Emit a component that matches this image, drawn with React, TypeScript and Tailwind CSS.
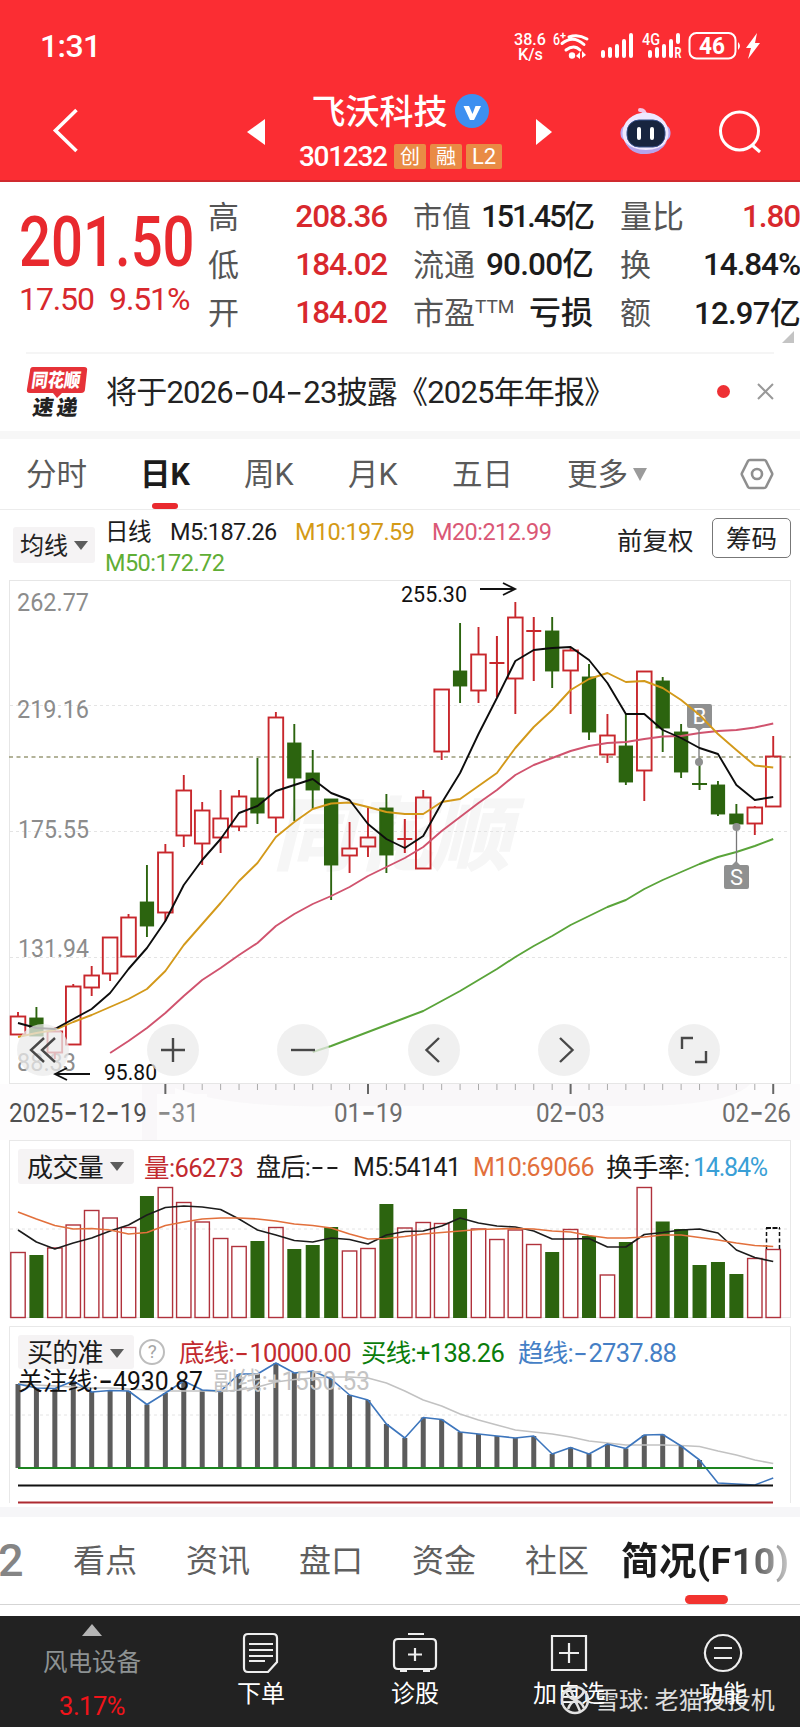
import React from 'react';

type Candle = [kind: 'r' | 'g', high: number, top: number, bottom: number, low: number];

const STEP = 18.42;
const xAt = (i: number) => 18 + STEP * i;

const CANDLES: Candle[] = [
    ['r', 1012, 1016, 1035, 1035], ['g', 1007, 1018, 1036, 1036], ['r', 1027, 1031, 1053, 1059], ['r', 984, 986, 1045, 1045],
    ['r', 966, 975, 988, 996], ['r', 937, 937, 974, 981], ['r', 914, 917, 957, 957], ['g', 865, 902, 926, 937],
    ['r', 844, 852, 913, 921], ['r', 775, 790, 836, 847], ['r', 802, 810, 844, 865], ['r', 790, 818, 838, 853],
    ['r', 790, 796, 827, 831], ['g', 758, 798, 813, 824], ['r', 712, 717, 818, 833], ['g', 724, 743, 778, 821],
    ['g', 750, 773, 790, 809], ['g', 799, 799, 865, 900], ['r', 822, 848, 856, 873], ['r', 808, 837, 847, 857],
    ['g', 794, 808, 855, 873], ['r', 819, 839, 839, 853], ['r', 790, 797, 869, 869], ['r', 689, 689, 752, 760],
    ['g', 623, 671, 686, 703], ['r', 627, 654, 691, 703], ['r', 636, 663, 663, 697], ['r', 602, 617, 679, 714],
    ['r', 617, 631, 631, 681], ['g', 617, 631, 671, 688], ['r', 648, 650, 671, 714], ['g', 664, 677, 732, 740],
    ['r', 714, 735, 755, 763], ['g', 714, 746, 782, 785], ['r', 671, 671, 771, 801], ['g', 677, 681, 728, 752],
    ['g', 724, 732, 772, 778], ['g', 758, 784, 784, 790], ['g', 781, 785, 814, 816], ['g', 804, 814, 824, 826],
    ['r', 806, 807, 824, 835], ['r', 736, 756, 807, 807],
];

const MA5 = [1023, 1028, 1029, 1019, 1009, 993, 969, 948, 921, 885, 860, 839, 813, 806, 791, 785, 779, 793, 800, 824, 839, 848, 836, 803, 773, 734, 698, 661, 650, 648, 647, 660, 683, 714, 714, 730, 738, 748, 754, 785, 800, 797];
const MA10 = [1037, 1033, 1030, 1022, 1015, 1007, 999, 989, 971, 945, 924, 903, 881, 863, 837, 822, 809, 803.5, 802.5, 807, 812, 814, 814, 802, 799, 786, 773, 748, 727, 710, 690, 679, 673, 682, 681, 688, 700, 715, 734, 750, 765.5, 767.5];
const MA20 = [1053, 1041, 1028, 1013, 996, 980, 968, 955, 943, 926, 914, 904, 896, 887, 876, 867, 858, 847, 831, 817, 803, 790, 775, 765, 758, 751, 746, 743, 742, 739, 736.5, 736, 733, 731, 730, 727.5, 723.5];
const MA50 = [1052, 1046, 1039, 1032, 1025, 1018, 1011, 1001, 991, 980, 969, 957, 946, 936, 925, 916, 907, 900, 889, 880, 872, 864, 857, 852, 846, 839];

const VOLUME = [1252.5, 1255, 1248, 1225, 1210.5, 1218, 1227.5, 1196, 1187.5, 1202.5, 1222, 1238.5, 1246.5, 1241, 1227.5, 1249, 1245, 1227, 1251, 1248.5, 1204, 1228, 1222.5, 1223.5, 1209, 1229, 1239.5, 1230, 1244.5, 1252, 1229.5, 1236, 1275, 1242, 1187.5, 1221.5, 1229, 1265, 1262, 1274, 1258.5, 1249.5];
const VOL5 = [1230, 1242, 1249, 1243, 1238, 1231, 1225, 1215, 1207.5, 1206, 1207, 1209.5, 1219, 1230, 1235, 1240.5, 1242, 1238, 1239.5, 1244, 1235, 1231.5, 1231, 1226, 1218, 1223, 1226, 1227, 1231, 1239, 1239, 1238.5, 1247, 1247, 1234.5, 1232.5, 1230, 1229, 1233, 1250, 1257.5, 1261.5];
const VOL10 = [1212, 1219, 1225.5, 1229, 1228.5, 1230, 1234, 1232.5, 1225.5, 1222, 1219, 1218, 1218, 1219, 1221, 1224, 1225.5, 1228, 1234, 1239, 1238.5, 1236.5, 1234, 1232.5, 1231, 1229.5, 1229, 1228.5, 1229, 1231, 1232, 1235.5, 1238, 1238, 1237, 1235, 1235, 1237.5, 1240, 1243, 1245.5, 1246.5];

const TREND = [1384, 1388, 1388.5, 1381, 1392, 1390.5, 1391, 1404.5, 1393, 1381, 1390, 1391, 1374, 1374, 1363, 1373, 1371, 1379, 1395, 1400, 1424, 1438, 1417.5, 1419.5, 1432, 1434, 1436, 1438, 1436, 1454, 1447.5, 1454, 1444, 1448.5, 1435, 1434.5, 1446, 1460, 1483, 1484, 1485, 1478];
const SUB = [1384, 1385, 1386, 1387, 1388, 1388, 1389, 1390, 1391, 1391, 1391, 1391.5, 1390, 1387, 1382, 1379.5, 1378, 1377, 1377, 1378, 1383, 1391, 1400, 1406, 1414, 1420, 1425, 1430, 1432, 1434, 1437, 1441, 1443, 1445, 1445, 1445, 1445.5, 1446.5, 1451, 1455, 1460, 1463.5];

const toPoints = (ys: number[], from = 0) => ys.map((y, i) => `${xAt(i + from)},${y}`).join(' ');

const Line: React.FC<{ ys: number[]; color: string; from?: number; width?: number }> = ({ ys, color, from = 0, width = 1.9 }) => (
    <polyline points={toPoints(ys, from)} fill="none" stroke={color} strokeWidth={width} strokeLinejoin="round" />
);

const GridLine: React.FC<{ y: number }> = ({ y }) => (
    <line x1="10" x2="790" y1={y} y2={y} stroke="#e4e4e4" strokeWidth="1" strokeDasharray="3 3" />
);

// Text stretched to a known width inside a chart, with long hyphens
const Label: React.FC<{ x: number; y: number; w: number; size: number; color: string; children: string; weight?: number }> = ({ x, y, w, size, color, children, weight = 400 }) => (
    <text x={x} y={y} textLength={w} lengthAdjust="spacingAndGlyphs" fontSize={size} fill={color} fontWeight={weight}>
        {children.split('-').map((part, i) => (
            <React.Fragment key={i}>
                {i > 0 && <tspan dy="2" fontFamily="Inter" fontSize={size * 1.3}>-</tspan>}
                {part && <tspan dy={i > 0 ? -2 : 0}>{part}</tspan>}
            </React.Fragment>
        ))}
    </text>
);

// Same long hyphens for ordinary text
const Dashed: React.FC<{ children: string }> = ({ children }) => (
    <>
        {children.split('-').map((part, i) => (
            <React.Fragment key={i}>
                {i > 0 && <span className="inline-block w-[0.6em] text-center font-['Inter'] tracking-normal scale-x-125">-</span>}
                {part}
            </React.Fragment>
        ))}
    </>
);

const Caret = () => <span className="w-0 h-0 border-x-[7px] border-x-transparent border-t-[9px] border-t-[#5c5c5c]" />;

const StatusBar = () => (
    <div className="flex h-[92px] items-center pl-[40px] text-white">
        <span className="w-[473px] text-[32px] font-medium leading-none tracking-[-0.6px]">1:31</span>
        <svg className="w-[250px] h-[32px] overflow-visible" viewBox="513 30 250 32" fill="#fff">
            <Label x={514} y={45} w={32} size={17} weight={500} color="#fff">38.6</Label>
            <Label x={518} y={60} w={25} size={16} weight={500} color="#fff">K/s</Label>
            <Label x={553} y={45} w={7} size={16} weight={500} color="#fff">6</Label>
            <Label x={560} y={39} w={6} size={11} weight={700} color="#fff">+</Label>
            <g fill="none" stroke="#fff" strokeWidth="3" strokeLinecap="round">
                <path d="M569 37q9-3.500 18 2M562 43.500q11-9 22 1M566 50q8-6 14 0" />
            </g>
            <circle cx="572" cy="55.500" r="3.200" />
            <path d="M576 56l4-4v7zM586 55l-4-4v7z" />
            <g stroke="#fff" strokeWidth="4" strokeLinecap="round">
                <path d="M603 52v4M610 49v7M617 46v10M624 41v15M631 35v21" />
                <path d="M650 52v4M657 49v7M664 46v10M671 41v15M678 35v7" />
            </g>
            <Label x={642} y={45} w={18} size={16} weight={500} color="#fff">4G</Label>
            <Label x={674.5} y={58} w={7} size={14} weight={700} color="#fff">R</Label>
            <rect x="689.500" y="33" width="46" height="25.500" rx="7" fill="none" stroke="#fff" strokeWidth="2" />
            <Label x={699} y={54} w={26} size={23} weight={700} color="#fff">46</Label>
            <path d="M738 42q4 4 0 8zM757 33l-11 15h5l-3 11 12-16h-5z" />
        </svg>
    </div>
);

const TitleBar = () => (
    <div className="flex h-[89px] text-white">
        <svg className="w-[240px] h-[80px]" viewBox="0 92 240 80" fill="none" stroke="#fff" strokeWidth="3.600">
            <path d="M76.500 110L55.500 130.500 76.500 151" />
        </svg>
        <svg className="w-[32px] h-[80px]" viewBox="240 92 32 80" fill="#fff"><path d="M247 132l18-13v26z" /></svg>
        <div className="w-[256px] flex flex-col items-center">
            <div className="flex items-center h-[38px]">
                <span className="pt-[2px] text-[34px] font-medium leading-none whitespace-nowrap">飞沃科技</span>
                <svg className="ml-[7px] w-[34px] h-[34px]" viewBox="0 0 34 34">
                    <circle cx="17" cy="17" r="17" fill="#3d8ff0" />
                    <path d="M8.500 12h5.500l3.500 8 3-8h5.500l-7 14h-4z" fill="#fff" />
                </svg>
            </div>
            <div className="flex items-center gap-[4px] mt-[13px] h-[26px]">
                <span className="w-[92px] pt-[2px] pl-[1px] text-[28px] font-medium leading-none tracking-[-1.3px]">301232</span>
                <span className="w-[32px] h-[25px] rounded-[2px] bg-[#e98b45] text-center text-[20px] leading-[26px]">创</span>
                <span className="w-[32px] h-[25px] rounded-[2px] bg-[#e98b45] text-center text-[20px] leading-[26px]">融</span>
                <span className="w-[36px] h-[25px] rounded-[2px] bg-[#e98b45] text-center text-[22px] leading-[26px]">L2</span>
            </div>
        </div>
        <svg className="w-[272px] h-[80px]" viewBox="528 92 272 80">
            <path d="M536 119l16 13-16 13z" fill="#fff" />
            <path d="M645 116q0-6-5-6" fill="none" stroke="#f4c6e6" strokeWidth="4" strokeLinecap="round" />
            <rect x="620.500" y="125" width="50" height="16" rx="7" fill="#b9a8f2" />
            <ellipse cx="645.500" cy="133" rx="23" ry="20.500" fill="#eee8ff" />
            <path d="M625 142q6 13 21 12 14 0 21-12-8 8-21 8t-21-8z" fill="#b5a4ec" />
            <rect x="627" y="120" width="38" height="27" rx="12" fill="#17243f" stroke="#36508a" />
            <path d="M639 129v9M652 129v9" stroke="#fff" strokeWidth="4" strokeLinecap="round" />
            <circle cx="739.500" cy="131" r="19" fill="none" stroke="#fff" strokeWidth="3" />
            <path d="M752 145l8 7" stroke="#fff" strokeWidth="3" />
        </svg>
    </div>
);

const Row: React.FC<{ label: React.ReactNode; value: string; size?: string; red?: boolean }> = ({ label, value, size = 'text-[31.500px] tracking-[-1.100px]', red }) => (
    <div className="flex h-[48px] items-center justify-between whitespace-nowrap leading-none">
        <span className="text-[31px] text-[#555]">{label}</span>
        <span className={`font-medium ${size} ${red ? 'text-[#d8282d]' : 'text-[#1c1c1c]'}`}>{value}</span>
    </div>
);

const Quote = () => (
    <div className="flex h-[170px] pt-[11px]">
        <div className="w-[208px] pl-[19px] whitespace-nowrap text-[#e8292e]">
            <div className="mt-[18px] h-[64px] w-[192px] origin-left scale-x-[0.81] text-[69.500px] font-medium leading-[64px]">201.50</div>
            <div className="mt-[8px] flex text-[32px] leading-[32px] tracking-[-1.100px] text-[#d8282d]">
                <span className="w-[90px]">17.50</span>
                <span>9.51%</span>
            </div>
        </div>
        <div className="w-[179px]">
            <Row label="高" value="208.36" red />
            <Row label="低" value="184.02" red />
            <Row label="开" value="184.02" red />
        </div>
        <div className="ml-[26px] w-[180px]">
            <Row label={<span className="text-[29px]">市值</span>} value="151.45亿" size="text-[30.500px] tracking-[-2px]" />
            <Row label="流通" value="90.00亿" size="text-[31.500px] tracking-[-0.800px]" />
            <Row label={<>市盈<sup className="text-[19px] -top-[11px]">TTM</sup></>} value="亏损" size="text-[32px]" />
        </div>
        <div className="ml-[27px] w-[180px]">
            <Row label={<span className="text-[32px]">量比</span>} value="1.80" red />
            <Row label="换" value="14.84%" size="text-[31.500px] tracking-[-1.100px]" />
            <Row label="额" value="12.97亿" size="text-[31px] tracking-[-0.700px]" />
            <div className="-mt-[6px] ml-[162px] w-0 h-0 border-l-[12px] border-l-transparent border-b-[12px] border-b-[#c4c4c4]" />
        </div>
    </div>
);

const News = () => (
    <div className="mx-[26px] flex h-[79px] items-center border-t-2 border-[#f5f5f5]">
        <svg className="-mt-[2px] w-[62px] h-[54px] overflow-visible" viewBox="26 364 62 54">
            <path d="M33 366h51q4 0 3 4l-2 18q0 4-4 4H62l-5 5-4-5H30q-4 0-3-4l3-18q0-4 3-4z" fill="#e63238" />
            <g transform="skewX(-8)">
                <Label x={85} y={386.5} w={49} size={19} weight={900} color="#fff">同花顺</Label>
                <Label x={90} y={414} w={21} size={21} weight={900} color="#222">速</Label>
                <Label x={114} y={414} w={21} size={21} weight={900} color="#222">递</Label>
            </g>
        </svg>
        <span className="-mt-[2px] ml-[18px] w-[612px] whitespace-nowrap text-[31px] leading-none tracking-[-0.800px] text-[#222]"><Dashed>将于2026-04-23披露《2025年年报》</Dashed></span>
        <span className="-mt-[2px] h-[13px] w-[13px] rounded-full bg-[#ee3034]" />
        <svg className="-mt-[2px] ml-[27px] w-[17px] h-[17px]" viewBox="0 0 17 17" stroke="#999" strokeWidth="2"><path d="M1 1l15 15M16 1L1 16" /></svg>
    </div>
);

const PERIODS = [
    { name: '分时', cell: 'w-[114px]' },
    { name: '日K', cell: 'w-[104px] font-bold text-[#1c1c1c]' },
    { name: '周K', cell: 'w-[104px]' },
    { name: '月K', cell: 'w-[104px]' },
    { name: '五日', cell: 'w-[115px]' },
    { name: '更多', cell: 'w-[66px]' },
];

const PeriodTabs = () => (
    <div className="border-t-8 border-[#f7f7f7]">
        <div className="flex h-[71px] items-center border-b border-[#ececec] pl-[26px] text-[30.500px] leading-none text-[#5a5a5a]">
            {PERIODS.map(p => (
                <div key={p.name} className={`relative flex h-full items-center whitespace-nowrap pt-[2px] ${p.cell}`}>
                    {p.name}
                    {p.name === '日K' && <span className="absolute bottom-0 left-[12px] h-[6px] w-[26px] rounded-full bg-[#e9292e]" />}
                </div>
            ))}
            <span className="w-0 h-0 border-x-[7.500px] border-x-transparent border-t-[13px] border-t-[#9b9b9b]" />
            <svg className="ml-[93px] w-[34px] h-[32px]" viewBox="0 0 34 32" fill="none" stroke="#8f8f8f" strokeWidth="2.600">
                <path d="M10 2h14q1.500 0 2 1l6 12q.5 1 0 2l-6 12q-.5 1-2 1H10q-1.500 0-2-1L2 17q-.5-1 0-2L8 3q.5-1 2-1z" />
                <circle cx="17" cy="16" r="5" />
            </svg>
        </div>
    </div>
);

const MaLegend = () => (
    <div className="flex h-[70px] whitespace-nowrap pl-[13px]">
        <div className="mt-[17px] flex h-[36px] w-[82px] items-center gap-[6px] rounded-[3px] bg-[#f5f3f4] pl-[7px] text-[24px] leading-none text-[#222]">
            <span className="pt-[2px]">均线</span><Caret />
        </div>
        <div className="ml-[10px] w-[512px] pt-[7px] text-[23.500px] leading-[31px] tracking-[-0.550px]">
            <div className="flex text-[#1c1c1c]">
                <span className="w-[65px]">日线</span>
                <span className="w-[125px]">M5:187.26</span>
                <span className="w-[137px] text-[#d49a16]">M10:197.59</span>
                <span className="text-[#da5876]">M20:212.99</span>
            </div>
            <div className="text-[#5fae35]">M50:172.72</div>
        </div>
        <div className="pt-[17px] w-[95px] text-[25.500px] leading-[28px] text-[#222]">前复权</div>
        <div className="mt-[8px] h-[40px] w-[79px] rounded-[5px] border border-[#777] text-center text-[25.500px] leading-[41px] text-[#222]">筹码</div>
    </div>
);

const BUTTONS = [
    'M27 14L14 26 27 38M38 14L25 26 38 38',
    'M14 26h24M26 14v24',
    'M14 26h24',
    'M31 14L18.500 26 31 38',
    'M22 14L34.500 26 22 38',
    'M14 25V14h11M38 27v11H27',
];

const KChart = () => (
    <div className="relative h-[560px]">
        <svg className="block w-full h-[560px]" viewBox="0 580 800 560">
            <rect x="0" y="1084" width="800" height="56" fill="#fdfcfd" />
            <path d="M142 1084h608q-20 22-120 22H330q-100 2-155-18v52h-33z" fill="#f6f5f6" opacity=".7" />
            <rect x="157" y="1094" width="50" height="46" fill="#fdfcfd" />
            <rect x="9.500" y="580.500" width="781" height="503" fill="#fff" stroke="#e6e6e6" />
            <text x="273" y="864" fontSize="80" fontWeight="900" fontStyle="italic" fill="#f6f6f6" textLength="238">同花顺</text>
            <GridLine y={705.5} />
            <GridLine y={831.5} />
            <GridLine y={957.5} />
            <Label x={17} y={611} w={72} size={26.5} color="#8c8c8c">262.77</Label>
            <Label x={17} y={718} w={72} size={26.5} color="#8c8c8c">219.16</Label>
            <Label x={18} y={838} w={71} size={26.5} color="#8c8c8c">175.55</Label>
            <Label x={18} y={957} w={71} size={26.5} color="#8c8c8c">131.94</Label>
            <Label x={17} y={1071} w={59} size={26.5} color="#8c8c8c">88.33</Label>
            <line x1="9" x2="791" y1="757" y2="757" stroke="#9a9a78" strokeWidth="1.500" strokeDasharray="4 3.500" />
            {CANDLES.map(([kind, high, top, bottom, low], i) => {
                const x = xAt(i);
                const color = kind === 'r' ? '#c8272c' : '#2c640f';
                if (top === bottom) {
                    return <path key={i} d={`M${x} ${high}V${low}M${x - 7.5} ${top}h15`} stroke={color} strokeWidth="2" />;
                }
                return (
                    <g key={i} stroke={color} strokeWidth="1.900">
                        <path d={`M${x} ${high}V${top}M${x} ${bottom}V${low}`} />
                        <rect x={x - (kind === 'r' ? 7.3 : 6.2)} y={top + 0.5} width={kind === 'r' ? 14.6 : 12.4} height={bottom - top - 1} fill={kind === 'r' ? 'none' : color} />
                    </g>
                );
            })}
            <Line ys={MA50} from={16} color="#5aa43a" />
            <Line ys={MA20} from={5} color="#d0536e" />
            <g fill="#8f9090" stroke="none">
                <path d="M699 728v34M736.500 827v38" stroke="#777" strokeWidth="1.300" />
                <circle cx="699" cy="762" r="4" />
                <circle cx="736.500" cy="827" r="4" />
                <path d="M689 704h21q2 0 2 2v20q0 2-2 2h-7l-4 3-4-3h-6q-2 0-2-2v-20q0-2 2-2z" />
                <path d="M726 865h6l4-4 4 4h7q2 0 2 2v20q0 2-2 2h-21q-2 0-2-2v-20q0-2 2-2z" />
            </g>
            <Label x={692.5} y={723.500} w={14} size={22} color="#fff">B</Label>
            <Label x={730} y={884.500} w={13} size={22} color="#fff">S</Label>
            <Line ys={MA10} color="#d3991a" />
            <Line ys={MA5} color="#0d0d0d" />
            <Label x={401} y={602} w={66} size={22.5} color="#111">255.30</Label>
            <Label x={104} y={1080} w={53} size={22.5} color="#111">95.80</Label>
            <path d="M480 589h35M503 583l12 6-12 6M90 1074H55M67 1068l-12 6 12 6" fill="none" stroke="#111" strokeWidth="1.900" />
            {CANDLES.map((_, i) => i >= 8 && (
                <path key={i} d={`M${xAt(i)} 1084v${(i - 8) % 11 === 0 ? 10 : 6}`} stroke={(i - 8) % 11 === 0 ? '#666' : '#aaa'} strokeWidth={(i - 8) % 11 === 0 ? 2 : 1} />
            ))}
            <Label x={9} y={1122} w={138} size={26} color="#505050">2025-12-19</Label>
            <Label x={157} y={1122} w={42} size={26} color="#8b8b8b">-31</Label>
            <Label x={334} y={1122} w={69} size={26} color="#6e6e6e">01-19</Label>
            <Label x={536} y={1122} w={69} size={26} color="#6e6e6e">02-03</Label>
            <Label x={722} y={1122} w={69} size={26} color="#6e6e6e">02-26</Label>
        </svg>
        <div className="absolute left-[17px] top-[444px] flex gap-[78.200px]">
            {BUTTONS.map(d => (
                <button key={d} className="h-[52px] w-[52px] rounded-full bg-[#ebebeb]/75">
                    <svg viewBox="0 0 52 52" fill="none" stroke="#484848" strokeWidth="2.400"><path d={d} /></svg>
                </button>
            ))}
        </div>
    </div>
);

const VolumeChart = () => (
    <div className="mx-[9px] h-[178px] border border-[#e8e8e8]">
        <div className="flex h-[44px] items-end whitespace-nowrap pl-[8px] text-[25px] leading-[34px] tracking-[-0.600px] text-[#1c1c1c]">
            <div className="mb-[1px] flex h-[35px] w-[116px] items-center gap-[7px] rounded-[3px] bg-[#f5f3f4] pl-[9px] text-[26px]"><span className="pt-[2px]">成交量</span><Caret /></div>
            <span className="ml-[10px] w-[112px] text-[25.500px] text-[#c22a2f]">量:66273</span>
            <span className="w-[97px]"><Dashed>盘后:--</Dashed></span>
            <span className="w-[120px]">M5:54141</span>
            <span className="w-[133px] text-[#e2703c]">M10:69066</span>
            <span className="w-[87px] text-[26.500px]">换手率:</span>
            <span className="text-[#3a9fd6] tracking-[-1.200px]">14.84%</span>
        </div>
        <svg className="-ml-[10px] block w-[800px] h-[134px]" viewBox="0 1185 800 134">
            <GridLine y={1229} />
            {VOLUME.map((top, i) => CANDLES[i][0] === 'r' ? (
                <rect key={i} x={xAt(i) - 7.2} y={top} width="14.400" height={1317.5 - top} fill="none" stroke="#b0323c" strokeWidth="1.400" />
            ) : (
                <rect key={i} x={xAt(i) - 7} y={top} width="14" height={1318 - top} fill="#2c640f" />
            ))}
            <path d="M766.500 1249v-21M779.500 1249v-21" stroke="#111" strokeWidth="1.500" strokeDasharray="4 2.500" />
            <path d="M766 1228h14" stroke="#111" strokeWidth="2" strokeDasharray="5 1.500" />
            <Line ys={VOL5} color="#1c1c1c" width={1.6} />
            <Line ys={VOL10} color="#e2703c" width={1.6} />
        </svg>
    </div>
);

const SignalChart = () => (
    <div className="relative mt-[8px] h-[178px]">
        <svg className="block w-full h-[178px]" viewBox="0 1326 800 178">
            <path d="M9.500 1503V1326.500h781V1503" fill="none" stroke="#e8e8e8" />
            <rect x="18" y="1335" width="116" height="34" rx="3" fill="#f5f3f4" />
            <GridLine y={1415} />
            {TREND.map((top, i) => top < 1468 && (
                <rect key={i} x={xAt(i) - 2.5} y={top} width="5" height={1468 - top} fill="#5c5c5c" />
            ))}
            <Line ys={SUB} color="#c2c2c2" width={1.5} />
            <Line ys={TREND} color="#3d76bd" width={1.6} />
            <path d="M18 1468h755" stroke="#1d8420" strokeWidth="2" />
            <path d="M18 1485.500h755" stroke="#111" strokeWidth="2" />
            <path d="M18 1502.500h755" stroke="#ad2a31" strokeWidth="2" />
            <Label x={18} y={1390} w={185} size={25} color="#111">关注线:-4930.87</Label>
            <Label x={213} y={1390} w={157} size={25} color="#c4c4c4">副线:+1550.53</Label>
        </svg>
        <div className="absolute left-[18px] top-[10px] flex h-[34px] items-center whitespace-nowrap text-[25.500px] leading-[34px] tracking-[-0.700px]">
            <div className="flex w-[121px] items-center gap-[7px] pl-[9px] text-[26px] text-[#1c1c1c]">买的准<Caret /></div>
            <span className="-mt-[3px] h-[26px] w-[26px] rounded-full border-2 border-[#bdbdbd] text-center text-[19px] leading-[22px] text-[#a5a5a5]">?</span>
            <span className="ml-[14px] w-[182px] text-[#c22a2f]"><Dashed>底线:-10000.00</Dashed></span>
            <span className="w-[157px] text-[#0b7d0b]">买线:+138.26</span>
            <span className="text-[#457fc6]"><Dashed>趋线:-2737.88</Dashed></span>
        </div>
    </div>
);

const INFO_TABS = ['看点', '资讯', '盘口', '资金', '社区'];

const InfoTabs = () => (
    <div className="mt-[3px] border-t-[10px] border-[#f6f6f8]">
        <div className="flex h-[88px] items-center overflow-hidden whitespace-nowrap border-b border-[#d5d5d5] text-[32px] leading-none text-[#5f5f5f]">
            <span className="-ml-[2px] w-[75px] text-[45px] font-medium text-[#858585]">2</span>
            {INFO_TABS.map(t => <span key={t} className="w-[113px] pt-[1px]">{t}</span>)}
            <div className="relative flex h-full items-center -ml-[17px] text-[37.500px] font-bold">
                <span className="bg-linear-to-r from-[#1c1c1c] from-65% to-[#c8c8c8] bg-clip-text pt-[10px] pb-2 tracking-[0.500px] text-transparent">简况(F10)</span>
                <span className="absolute bottom-0 left-[64px] h-[9px] w-[43px] rounded-full bg-[#f2332f]" />
            </div>
        </div>
    </div>
);

const ACTIONS = [
    { name: '下单', d: 'M5 1h25q4 0 4 4v24l-9 10H5q-4 0-4-4V5q0-4 4-4zM6 11h24M6 17h24M6 23h24M6 28h16' },
    { name: '诊股', d: 'M11 1h16M3 6h32q4 0 4 4v22q0 4-4 4H1q-4 0-4-4V10q0-4 4-4zM18 15v13M11 21.500h14M3 38h7M26 38h7' },
    { name: '加自选', d: 'M1 3h34v34H1zM18 10v20M8 20h20' },
    { name: '功能', d: 'M18 2a18 18 0 1 0 .1 0zM9 15h18M9 25h18' },
];

const BottomBar = () => (
    <div className="relative mt-[11px] flex h-[112px] bg-[#222] whitespace-nowrap">
        <div className="flex w-[184px] flex-col items-center pt-[8px]">
            <span className="w-0 h-0 border-x-[10px] border-x-transparent border-b-[12px] border-b-[#b5b5b5]" />
            <span className="mt-[12px] text-[24.500px] leading-[30px] text-[#8d9293]">风电设备</span>
            <span className="mt-[13px] text-[25.500px] leading-[30px] tracking-[-0.500px] text-[#f0141a]">3.17%</span>
        </div>
        {ACTIONS.map(a => (
            <div key={a.name} className="flex w-[154px] flex-col items-center pt-[16px] text-white">
                <svg className="w-[48px] h-[42px]" viewBox="-6 -1 48 42" fill="none" stroke="#eee" strokeWidth="2.200"><path d={a.d} /></svg>
                <span className="mt-[4px] text-[24px] leading-[32px]">{a.name}</span>
            </div>
        ))}
        <div className="absolute left-[560px] top-[68px] flex h-[32px] items-center gap-[5px] text-[24px] leading-none text-white/85">
            <svg className="w-[30px] h-[30px]" viewBox="0 0 30 30" fill="none" stroke="#e2e2e2" strokeWidth="2.500">
                <circle cx="15" cy="15" r="13" />
                <path d="M6 7q4 8 9 7t9-7M8 24q3-8 8-8t8 7M10 4l10 22" />
            </svg>
            <span className="pt-[2px]">雪球: 老猫投投机</span>
        </div>
    </div>
);

export default function App() {
    return (
        <div className="w-[800px] h-[1727px] overflow-hidden bg-white font-[Roboto,'Noto_Sans_CJK_SC',sans-serif]">
            <header className="h-[182px] border-b-2 border-[#d02a2f] bg-[#fb2d33]">
                <StatusBar />
                <TitleBar />
            </header>
            <Quote />
            <News />
            <PeriodTabs />
            <MaLegend />
            <KChart />
            <VolumeChart />
            <SignalChart />
            <InfoTabs />
            <BottomBar />
        </div>
    );
}
